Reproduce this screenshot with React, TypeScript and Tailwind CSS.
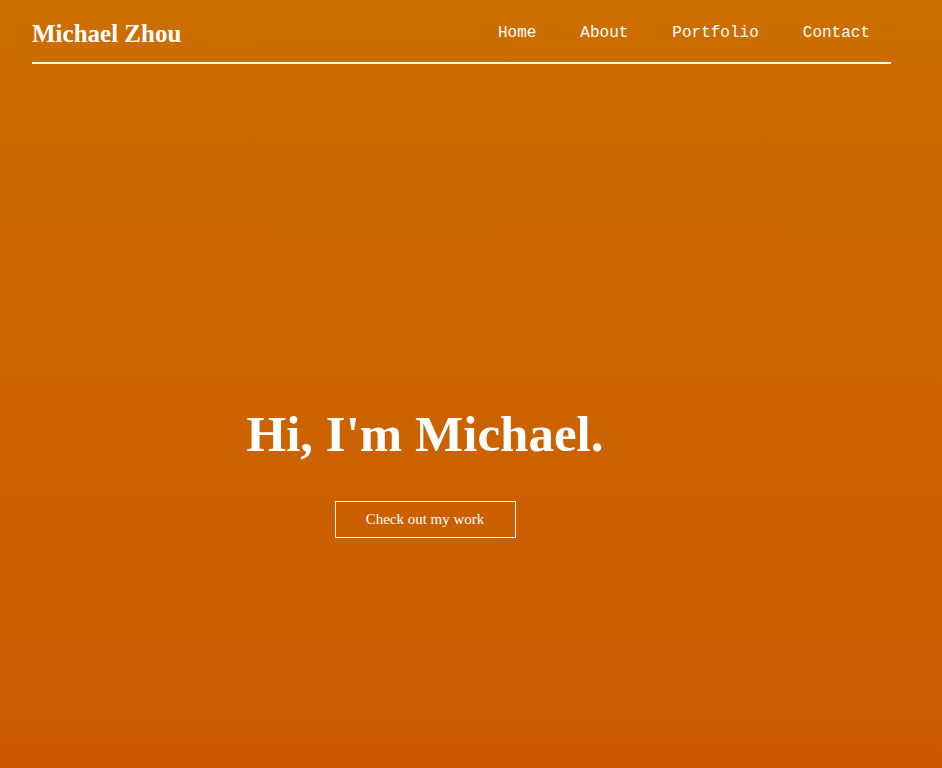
export default function App() {
  const links = ['Home', 'About', 'Portfolio', 'Contact']
  return (
    <div className="flex h-[768px] flex-col bg-gradient-to-b from-[#cc6e00] to-[#cb5800] text-white">
      <header className="ml-8 mr-[51px] flex h-[64px] items-start justify-between border-b-2 border-white">
        <a href="#" className="pt-[21px] font-['Liberation_Serif',serif] text-[25px] font-bold leading-none">
          Michael Zhou
        </a>
        <nav className="flex pt-[25px] pr-[21px] font-['Liberation_Mono',monospace] text-[16px] leading-none">
          {links.map((l, i) => (
            <a key={l} href="#" className={i === 0 ? '' : 'ml-[44px]'}>
              {l}
            </a>
          ))}
        </nav>
      </header>
      <main className="flex w-[850px] flex-1 flex-col items-center pt-[345px] font-['Liberation_Serif',serif]">
        <h1 className="text-[51px] font-bold leading-none">Hi, I'm Michael.</h1>
        <a href="#" className="mt-[41px] flex h-[37px] w-[181px] items-center justify-center border border-white text-[15px]">
          Check out my work
        </a>
      </main>
    </div>
  )
}
